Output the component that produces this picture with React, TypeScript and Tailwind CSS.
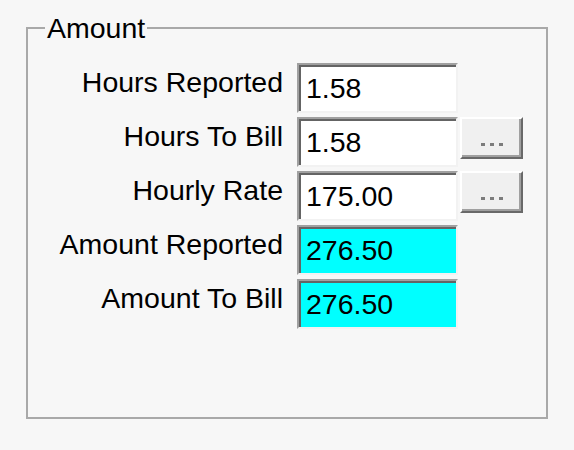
import React from "react";

const rows = [
  { label: "Hours Reported", value: "1.58", picker: false, calc: false },
  { label: "Hours To Bill", value: "1.58", picker: true, calc: false },
  { label: "Hourly Rate", value: "175.00", picker: true, calc: false },
  { label: "Amount Reported", value: "276.50", picker: false, calc: true },
  { label: "Amount To Bill", value: "276.50", picker: false, calc: true },
];

function PickerButton() {
  return (
    <button
      type="button"
      aria-label="..."
      className="ml-[2px] flex h-[42px] w-[63px] items-end justify-center gap-[5px] border-2 border-t-white border-l-white border-b-[#696969] border-r-[#696969] bg-[#f0f0f0] pb-[11px] shadow-[inset_-2px_-2px_0_#a0a0a0]"
    >
      <span className="h-[3px] w-[4px] bg-[#7c7c7c]" />
      <span className="h-[3px] w-[4px] bg-[#7c7c7c]" />
      <span className="h-[3px] w-[4px] bg-[#7c7c7c]" />
    </button>
  );
}

export default function App() {
  return (
    <div
      className="h-[450px] w-[574px] overflow-hidden bg-[#f7f7f7] pt-[12px] text-black"
      style={{ fontFamily: '"Liberation Sans", Arial, sans-serif' }}
    >
      <fieldset className="ml-[26px] h-[407px] w-[522px] border-2 border-[#a9a9a9] pt-[19px]">
        <legend className="ml-[17px] px-[2px] text-[28.5px] leading-[32px]">Amount</legend>

        <div className="flex flex-col gap-[4px]">
          {rows.map((row) => (
            <div key={row.label} className="flex h-[50px] items-start">
              <div className="w-[255px] text-right text-[28.5px] leading-[38px]">{row.label}</div>
              <div
                className={
                  "ml-[14px] h-[50px] w-[161px] border-2 border-t-[#a0a0a0] border-l-[#a0a0a0] border-b-[#f2f2f2] border-r-[#f2f2f2] pl-[7px] text-[28.5px] leading-[46px] shadow-[inset_2px_2px_0_#646464] " +
                  (row.calc ? "bg-[#00ffff]" : "bg-white")
                }
              >
                {row.value}
              </div>
              {row.picker && <PickerButton />}
            </div>
          ))}
        </div>
      </fieldset>
    </div>
  );
}
